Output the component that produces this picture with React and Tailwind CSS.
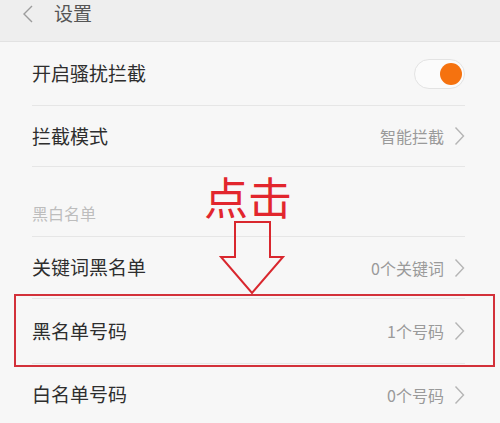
import { useState } from "react";

const font = { fontFamily: '"Noto Sans CJK SC", "Noto Sans", sans-serif' };

const Chevron = () => (
  <svg width="11" height="20" viewBox="0 0 11 20" className="ml-[10px]">
    <path d="M1.5 1.5 L9.5 10 L1.5 18.5" fill="none" stroke="#b5b5b5" strokeWidth="1.4" />
  </svg>
);

const Row = ({ title, value, height = "h-[62px]", last }) => (
  <div className={`${height} flex items-center justify-between ml-[32px] mr-[35px] ${last ? "" : "border-b border-[#e6e6e6]"}`}>
    <span className="text-[19px] text-[#2e2e2e]">{title}</span>
    {value !== undefined && (
      <div className="flex items-center">
        <span className="text-[16px] text-[#9a9a9a]">{value}</span>
        <Chevron />
      </div>
    )}
  </div>
);

const App = () => {
  const [on, setOn] = useState(true);

  return (
    <div className="relative w-[500px] h-[423px] overflow-hidden bg-[#f7f7f7]" style={font}>
      <div className="h-[42px] bg-[#eeeeee] border-b border-[#e2e2e2] flex items-start pt-[1px]">
        <svg width="12" height="18" viewBox="0 0 12 18" className="ml-[22px] mt-[4px]">
          <path d="M10 1 L2 9 L10 17" fill="none" stroke="#9c9c9c" strokeWidth="1.4" />
        </svg>
        <span className="ml-[20px] text-[19px] leading-[24px] text-[#555]">设置</span>
      </div>

      <div className="h-[64px] flex items-center justify-between ml-[32px] mr-[35px] border-b border-[#e6e6e6]">
        <span className="text-[19px] text-[#2e2e2e]">开启骚扰拦截</span>
        <button
          onClick={() => setOn(!on)}
          className="w-[51px] h-[30px] rounded-full bg-[#fbfbfb] border border-[#e3e3e3] flex items-center px-[2px]"
        >
          <span className={`w-[22px] h-[22px] rounded-full bg-[#f5720f] ${on ? "ml-auto" : ""}`} />
        </button>
      </div>

      <Row title="拦截模式" value="智能拦截" height="h-[61px]" />

      <div className="h-[70px] flex items-center ml-[32px] mr-[35px] border-b border-[#e6e6e6] pt-[22px]">
        <span className="text-[16px] text-[#bdbdbd]">黑白名单</span>
      </div>

      <Row title="关键词黑名单" value="0个关键词" />
      <Row title="黑名单号码" value="1个号码" height="h-[65px]" />
      <Row title="白名单号码" value="0个号码" />

      {/* annotation overlay */}
      <div className="absolute left-[204px] top-[166px] text-[44px] leading-[60px] font-normal text-[#e2262d]">点击</div>
      <svg width="70" height="76" viewBox="0 0 70 76" className="absolute left-[218px] top-[220px]">
        <path d="M17 2 H52 V37 H65 L34 73 L3 37 H17 Z" fill="none" stroke="#d9272e" strokeWidth="2" strokeLinejoin="miter" />
      </svg>
      <div className="absolute left-[14px] top-[294px] w-[481px] h-[73px] border-2 border-[#d3313a]" />
    </div>
  );
};

export default App;
